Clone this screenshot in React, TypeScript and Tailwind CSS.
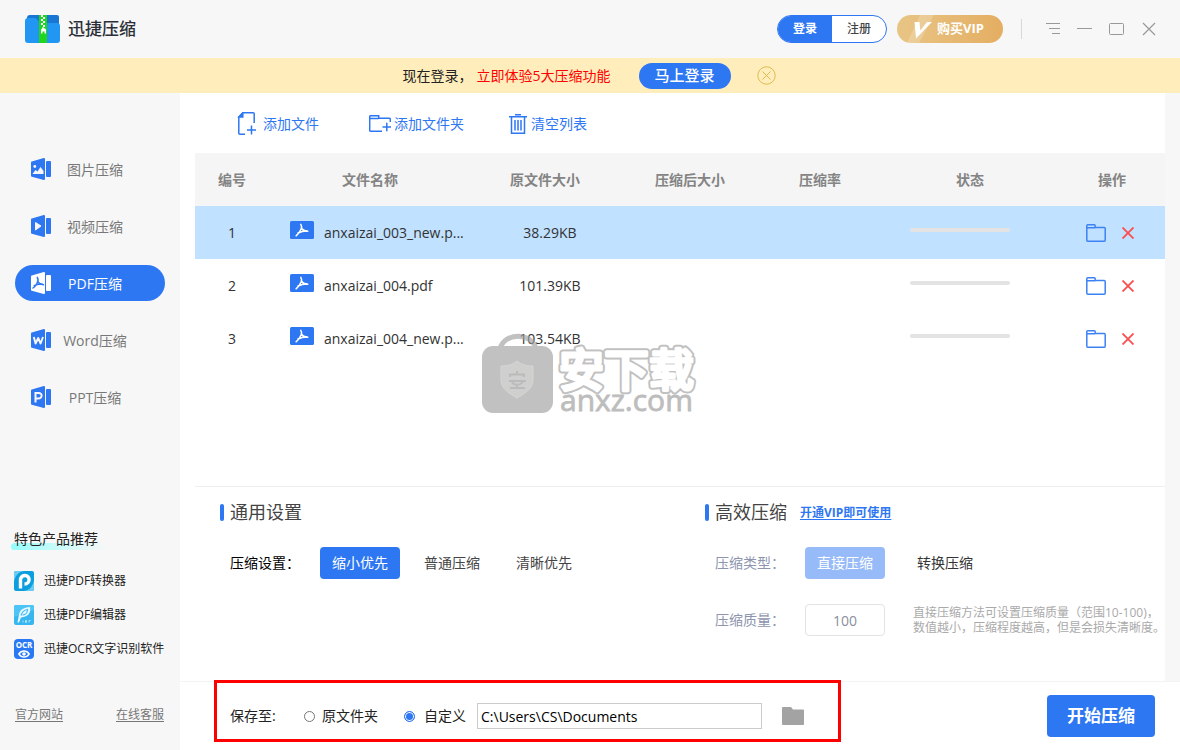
import { useState, type ReactNode } from 'react';

const NAV_ITEMS = [
  { id: 'image', label: '图片压缩' },
  { id: 'video', label: '视频压缩' },
  { id: 'pdf', label: 'PDF压缩' },
  { id: 'word', label: 'Word压缩' },
  { id: 'ppt', label: 'PPT压缩' },
];

const FILES = [
  { id: 1, name: 'anxaizai_003_new.p...', size: '38.29KB' },
  { id: 2, name: 'anxaizai_004.pdf', size: '101.39KB' },
  { id: 3, name: 'anxaizai_004_new.p...', size: '103.54KB' },
];

function Logo() {
  return (
    <svg width="35" height="28" viewBox="0 0 35 28" aria-hidden="true">
      <path d="M2 3a3 3 0 0 1 3-3h27a2 2 0 0 1 2 2v10H2z" fill="#1976d2" />
      <path d="M0 6a3 3 0 0 1 3-3h6c4 0 4 5 8 5h15a3 3 0 0 1 3 3v14a3 3 0 0 1-3 3H3a3 3 0 0 1-3-3z" fill="#2196f3" />
      <path d="M14 0h8v28h-8z" fill="#1fd51f" />
      <path d="M16 0h2v2h-2zM18 2h2v2h-2zM16 4h2v2h-2zM18 6h2v2h-2zM16 8h2v2h-2zM18 10h2v2h-2z" fill="#fff" />
      <path d="M16 15.500a2.500 2.500 0 0 1 5 0V18.500h-1.500v-2h-2v2H16zM17 12.500h2v2h-2z" fill="#fff" />
    </svg>
  );
}

function NavGlyph({ id }: { id: string }) {
  if (id === 'image') {
    return (
      <g fill="#f7f7f7">
        <circle cx="3.800" cy="8.500" r="1.400" />
        <path d="M1.500 16l3-4 2 1.500L9.500 9l3 4v3z" />
      </g>
    );
  }
  if (id === 'video') {
    return <path d="M4.500 7.500l5.500 3.500-5.500 4z" fill="#f7f7f7" stroke="#f7f7f7" strokeLinejoin="round" />;
  }
  if (id === 'pdf') {
    return (
      <path
        d="M6.300 5.300c1.200 2 1 4-.3 6-1 1.800-2.300 3.500-4 4.700M6.800 9.500c1 1.800 3 3 5.700 3.200M3.200 13.700c2.300-1.300 5-1.900 8-1.700"
        fill="none"
        stroke="#2e77f2"
        strokeWidth="1.500"
        strokeLinecap="round"
      />
    );
  }
  if (id === 'word') {
    return (
      <path
        d="M2.800 8l1.800 6.500L7.200 9l2.400 5.500L12 8"
        fill="none"
        stroke="#f7f7f7"
        strokeWidth="1.900"
        strokeLinejoin="round"
      />
    );
  }
  return <path d="M4.500 16.500V7h3c4.500 0 4 5.500-.5 5.500H5" fill="none" stroke="#f7f7f7" strokeWidth="2" />;
}

function NavIcon({ id, active }: { id: string; active: boolean }) {
  return (
    <svg width="20" height="22" viewBox="0 0 20 22" aria-hidden="true">
      <g fill={active ? '#fff' : '#2e77f2'}>
        <path d="M.8 3.400L12.800.1Q14 0 14 1v20q0 1-1.200.9L.8 18.800Q0 18.600 0 17.800V4.400Q0 3.600.8 3.400z" />
        <rect x="15" y="3" width="5" height="16" rx="1" />
      </g>
      <NavGlyph id={id} />
    </svg>
  );
}

function PdfBadge() {
  return (
    <svg width="24" height="18" viewBox="0 0 24 18" className="mb-[6px] shrink-0" aria-hidden="true">
      <rect width="24" height="18" rx="1.500" fill="#2e77f2" />
      <path
        d="M10.800 3.300c1 1.600 1 3.200.3 4.700-1 2.500-2.800 5-5 6.800M11.300 7c1 1.700 3.600 3 6.500 3.200M8 12c2.500-1.200 5.500-1.900 9-1.900"
        fill="none"
        stroke="#fff"
        strokeWidth="1.500"
        strokeLinecap="round"
      />
    </svg>
  );
}

function FolderIcon() {
  return (
    <svg width="20" height="18" viewBox="0 0 20 18" fill="none" stroke="#3d82f4" strokeWidth="1.500" aria-hidden="true">
      <path d="M.8 16.200V1.800q0-1 1-1h6.400q1 0 1 1v1.700h9q1 0 1 1v11.700q0 1-1 1H1.800q-1 0-1-1zM.8 3.700h8.400" />
    </svg>
  );
}

function ProductIcon({ kind }: { kind: string }) {
  if (kind === 'converter') {
    return (
      <svg width="20" height="20" viewBox="0 0 20 20" aria-hidden="true">
        <rect width="20" height="20" rx="2" fill="#0c9fe0" />
        <path d="M0 11V2a2 2 0 0 1 2-2h8C4 1 1 5 0 11zM20 9v9a2 2 0 0 1-2 2h-8c6-1 9-5 10-11z" fill="#6ccbf0" />
        <path d="M6.500 17.500V8Q7.500 4.500 11 4.500c5.500 0 5.500 8.500-.5 8.500" fill="none" stroke="#fff" strokeWidth="3.400" />
      </svg>
    );
  }
  if (kind === 'editor') {
    return (
      <svg width="20" height="20" viewBox="0 0 20 20" aria-hidden="true">
        <rect width="20" height="20" rx="2" fill="#38b6f0" />
        <path d="M0 12V2a2 2 0 0 1 2-2h16a2 2 0 0 1 2 2v3z" fill="#4cc5f6" />
        <path d="M3.500 17.500L5 9.500C6 5 9 2.500 16 2c1 5-1 10-9 10.500L5 17.500z" fill="#e6f7ff" />
        <path d="M7 10.500c1-3.500 3-5.500 6.500-6 0 3.500-2.500 5.500-5 5.500" fill="none" stroke="#42bdf3" strokeWidth="1.200" />
        <path d="M9 15.500v2M11.500 15.500v2h1v-2zM15 17.500v-2h1.500" fill="none" stroke="#c8eeff" strokeWidth="0.800" />
      </svg>
    );
  }
  return (
    <span className="flex size-5 flex-col items-center rounded-sm bg-[#2979f5] text-white">
      <span className="text-[8px] leading-[11px] font-bold">OCR</span>
      <svg width="12" height="8" viewBox="0 0 12 8" aria-hidden="true">
        <path d="M.8 4C3.500 0 8.500 0 11.200 4 8.500 8 3.500 8 .8 4z" fill="none" stroke="#fff" strokeWidth="1.400" />
        <circle cx="6" cy="4" r="1.800" fill="#fff" />
      </svg>
    </span>
  );
}

function TitleBar() {
  return (
    <header className="flex h-[58px] items-center justify-between bg-[#f7f7f7] pr-6 pl-[25px]">
      <div className="flex items-center gap-2">
        <Logo />
        <h1 className="text-[17px] leading-6 font-medium text-[#2b3038]">迅捷压缩</h1>
      </div>
      <div className="flex items-center">
        <div className="flex h-7 w-[110px] overflow-hidden rounded-full border border-[#2e77f2] bg-white text-xs">
          <button type="button" className="flex-1 bg-[#2e77f2] font-bold text-white">登录</button>
          <button type="button" className="flex-1 font-medium text-[#444]">注册</button>
        </div>
        <button
          type="button"
          className="ml-[10px] flex h-7 w-[106px] items-center gap-1 rounded-full bg-linear-to-r from-[#e8c585] to-[#e4ae62] pl-[10px] text-[13px] font-bold text-white"
        >
          <svg width="26" height="28" viewBox="0 0 26 28" aria-hidden="true">
            <path d="M13 0h14L12 28H0z" fill="#fff" opacity="0.200" />
            <path d="M7.500 7h5l.8 8.500L20 7h5L9 23.500z" fill="#fff" />
          </svg>
          购买VIP
        </button>
        <span className="mr-6 ml-[18px] h-5 w-px bg-[#d8d8d8]" />
        <div className="flex items-center gap-[17px] text-[#999]">
          <button type="button" aria-label="菜单">
            <svg width="14" height="14" viewBox="0 0 14 14" stroke="currentColor" aria-hidden="true">
              <path d="M0 1.500h14M3 6.500h11M6 11.500h8" />
            </svg>
          </button>
          <button type="button" aria-label="最小化">
            <svg width="15" height="14" viewBox="0 0 15 14" stroke="currentColor" aria-hidden="true">
              <path d="M0 6.500h15" />
            </svg>
          </button>
          <button type="button" aria-label="最大化">
            <svg width="15" height="14" viewBox="0 0 15 14" fill="none" stroke="currentColor" aria-hidden="true">
              <rect x="0.500" y="1.500" width="14" height="11" rx="1" />
            </svg>
          </button>
          <button type="button" aria-label="关闭">
            <svg width="15" height="14" viewBox="0 0 15 14" stroke="currentColor" strokeWidth="1.200" aria-hidden="true">
              <path d="M2 1l12 12M14 1L2 13" />
            </svg>
          </button>
        </div>
      </div>
    </header>
  );
}

function LoginBanner() {
  return (
    <div className="flex h-[35px] items-center justify-center bg-[#ffeebb] pr-[2px] text-sm">
      <span className="text-[#222]">现在登录，</span>
      <span className="ml-1 text-[#ff0000]">立即体验5大压缩功能</span>
      <button
        type="button"
        className="ml-7 h-[26px] w-[92px] rounded-full bg-[#2e77f2] text-[15px] font-medium text-white"
      >
        马上登录
      </button>
      <button type="button" className="ml-[26px]" aria-label="关闭提示">
        <svg width="19" height="19" viewBox="0 0 19 19" fill="none" stroke="#dfb94f" aria-hidden="true">
          <circle cx="9.500" cy="9.500" r="8.700" />
          <path d="M5.500 5.500l8 8M13.500 5.500l-8 8" />
        </svg>
      </button>
    </div>
  );
}

function Sidebar({ active, onSelect }: { active: string; onSelect: (id: string) => void }) {
  return (
    <aside className="flex w-[180px] shrink-0 flex-col bg-[#f7f7f7] pt-[58px]">
      <nav className="flex flex-col gap-[21px] px-[15px]">
        {NAV_ITEMS.map((item) => (
          <button
            key={item.id}
            type="button"
            onClick={() => onSelect(item.id)}
            className={`flex h-9 items-center rounded-full pl-4 text-sm ${
              active === item.id ? 'bg-[#2e77f2] text-white' : 'text-[#777]'
            }`}
          >
            <NavIcon id={item.id} active={active === item.id} />
            <span className="w-[88px] pt-px text-center">{item.label}</span>
          </button>
        ))}
      </nav>

      <div className="mt-auto pb-[25px] pl-[14px]">
        <div className="relative">
          <span className="absolute top-[14px] -left-[3px] h-[7px] w-24 rounded-full bg-linear-to-r from-[#92fdfb] to-[#f7f7f7]" />
          <h2 className="relative text-sm leading-5 text-[#222]">特色产品推荐</h2>
        </div>
        <ul className="mt-[22px] flex flex-col gap-[14px] text-xs leading-5 text-[#222]">
          <li className="flex items-center gap-[10px]">
            <ProductIcon kind="converter" />
            迅捷PDF转换器
          </li>
          <li className="flex items-center gap-[10px]">
            <ProductIcon kind="editor" />
            迅捷PDF编辑器
          </li>
          <li className="flex items-center gap-[10px] whitespace-nowrap">
            <ProductIcon kind="ocr" />
            迅捷OCR文字识别软件
          </li>
        </ul>
        <div className="mt-[46px] mr-4 ml-px flex justify-between text-xs leading-5 text-[#777] underline underline-offset-2">
          <a href="#site">官方网站</a>
          <a href="#support">在线客服</a>
        </div>
      </div>
    </aside>
  );
}

function Toolbar() {
  return (
    <div className="flex h-[60px] items-center pt-px pl-[57px] text-sm text-[#2e77f2]">
      <button type="button" className="flex items-center gap-1">
        <svg width="22" height="24" viewBox="0 0 22 24" fill="none" stroke="currentColor" strokeWidth="1.500" aria-hidden="true">
          <path d="M17.200 11V1.800q0-1-1-1H5.800L1.800 5v16.200q0 1 1 1H8" />
          <path d="M5.800 1v4H2z" fill="currentColor" />
          <path d="M10 18h9M14.500 13.500v9" />
        </svg>
        添加文件
      </button>
      <button type="button" className="ml-[50px] flex items-center gap-[3px]">
        <svg width="22" height="18" viewBox="0 0 22 18" fill="none" stroke="currentColor" strokeWidth="1.500" aria-hidden="true">
          <path d="M13 16.300H1.700q-1 0-1-1V1.700q0-1 1-1h8v2.600h10.600q1 0 1 1V7M.7 3.500h9" />
          <path d="M13.500 12h8.500M17.800 7.800v8.500" />
        </svg>
        添加文件夹
      </button>
      <button type="button" className="ml-[45px] flex items-center gap-1">
        <svg width="18" height="20" viewBox="0 0 18 20" fill="none" stroke="currentColor" strokeWidth="1.500" aria-hidden="true">
          <path d="M0 2.800h18M6 .8h6M2.500 3v16.200h13V3M6 6v10.500M9 6v10.500M12 6v10.500" />
        </svg>
        清空列表
      </button>
    </div>
  );
}

function FileTable() {
  const [selected, setSelected] = useState(1);

  return (
    <table className="ml-[15px] w-[calc(100%-15px)] table-fixed text-center text-sm text-[#333]">
      <colgroup>
        <col className="w-[74px]" />
        <col className="w-[202px]" />
        <col className="w-[148px]" />
        <col className="w-[142px]" />
        <col className="w-[118px]" />
        <col className="w-[182px]" />
        <col className="w-[104px]" />
      </colgroup>
      <thead>
        <tr className="h-[53px] bg-[#f5f5f5] text-[#848484]">
          <th className="font-bold">编号</th>
          <th className="font-bold">文件名称</th>
          <th className="font-bold">原文件大小</th>
          <th className="font-bold">压缩后大小</th>
          <th className="font-bold">压缩率</th>
          <th className="font-bold">状态</th>
          <th className="pr-[2px] font-bold">操作</th>
        </tr>
      </thead>
      <tbody>
        {FILES.map((file) => (
          <tr
            key={file.id}
            onClick={() => setSelected(file.id)}
            className={`h-[53px] ${selected === file.id ? 'bg-[#c0e1ff]' : ''}`}
          >
            <td>{file.id}</td>
            <td>
              <div className="flex items-center gap-[10px] pl-[21px] whitespace-nowrap">
                <PdfBadge />
                {file.name}
              </div>
            </td>
            <td className="pl-[10px]">{file.size}</td>
            <td />
            <td />
            <td className="pr-5">
              <div className="mx-auto mb-[5px] h-1 w-[100px] rounded-full bg-[#e3e3e3]" />
            </td>
            <td>
              <div className="flex items-center gap-4 pl-[25px]">
                <button type="button" aria-label="打开文件夹">
                  <FolderIcon />
                </button>
                <button type="button" aria-label="删除">
                  <svg width="12" height="12" viewBox="0 0 12 12" stroke="#fb4e4e" strokeWidth="1.800" aria-hidden="true">
                    <path d="M.5.5l11 11M11.500.5l-11 11" />
                  </svg>
                </button>
              </div>
            </td>
          </tr>
        ))}
      </tbody>
    </table>
  );
}

function Watermark() {
  return (
    <svg
      width="220"
      height="96"
      viewBox="0 0 220 96"
      className="pointer-events-none absolute top-[239px] left-[302px]"
    >
      <path d="M18 17c4-17 32-17 36 0" fill="none" stroke="#a0a0a0" strokeOpacity="0.650" strokeWidth="5" />
      <rect y="14" width="71" height="67" rx="11" fill="#c1c1c1" />
      <path
        d="M35 29c5 4 10 5 16 5v14c0 9-9 14-16 18-7-4-16-9-16-18V34c6 0 11-1 16-5z"
        fill="#cfcfcd"
        stroke="#d6d6d6"
      />
      <path
        d="M35 39v3M28 45v-2.500h14V45M27 49h17M30 49c1 5 9 5 11 0M28 56h15M35 52v3"
        fill="none"
        stroke="#bbb"
        strokeWidth="2"
      />
      {/* two passes over one text give the rounded outline */}
      <defs>
        <text id="wm-name" x="77" y="55" fontSize="45" fontWeight="500" strokeLinejoin="round">安下载</text>
      </defs>
      <use href="#wm-name" fill="#c1c1c1" stroke="#c1c1c1" strokeWidth="7" />
      <use href="#wm-name" fill="#fff" stroke="#fff" strokeWidth="3" />
      <text x="78" y="79" fontSize="30" fill="#bdbdbd" stroke="#bdbdbd" strokeWidth="0.800">anxz.com</text>
    </svg>
  );
}

function SectionTitle({ children }: { children: ReactNode }) {
  return (
    <h2 className="flex items-center gap-[6px] text-lg leading-6 text-[#444]">
      <span className="h-[17px] w-1 rounded-sm bg-[#2e77f2]" />
      {children}
    </h2>
  );
}

function Settings() {
  const [mode, setMode] = useState('缩小优先');

  return (
    <section className="ml-[15px] grid h-[195px] grid-cols-2 border-t border-[#eee] pt-[13px] text-sm">
      <div className="pl-[25px]">
        <SectionTitle>通用设置</SectionTitle>
        <div className="mt-[23px] flex items-center pl-[10px]">
          <span className="w-[90px] text-black">压缩设置：</span>
          <div className="flex gap-3">
            {['缩小优先', '普通压缩', '清晰优先'].map((name) => (
              <button
                key={name}
                type="button"
                onClick={() => setMode(name)}
                className={`h-8 w-20 rounded ${mode === name ? 'bg-[#2e77f2] text-white' : 'text-[#444]'}`}
              >
                {name}
              </button>
            ))}
          </div>
        </div>
      </div>

      <div className="pl-[25px]">
        <div className="flex items-center gap-[13px]">
          <SectionTitle>高效压缩</SectionTitle>
          <a href="#vip" className="pt-[2px] text-xs font-bold text-[#2e77f2] underline underline-offset-2">
            开通VIP即可使用
          </a>
        </div>
        <div className="mt-[23px] flex items-center pl-[10px]">
          <span className="w-[90px] text-[#8d95ae]">压缩类型：</span>
          <button type="button" className="h-8 w-20 rounded bg-[#97bbf9] text-white">直接压缩</button>
          <button type="button" className="ml-5 h-8 w-20 text-[#333]">转换压缩</button>
        </div>
        <div className="mt-[25px] flex items-center pl-[10px]">
          <label htmlFor="quality" className="w-[90px] shrink-0 text-[#8d95ae]">压缩质量：</label>
          <input
            id="quality"
            defaultValue="100"
            className="h-8 w-20 shrink-0 rounded-sm border border-[#e3e3e3] text-center text-sm text-[#8a8f9c] outline-none"
          />
          <p className="ml-7 text-xs leading-[15px] whitespace-nowrap text-[#aaa]">
            直接压缩方法可设置压缩质量（范围10-100)，
            <br />
            数值越小，压缩程度越高，但是会损失清晰度。
          </p>
        </div>
      </div>
    </section>
  );
}

const RADIO_CLASS =
  'size-[11px] appearance-none rounded-full border border-[#767676] bg-white checked:border-[#2e77f2] checked:bg-[#2e77f2] checked:shadow-[inset_0_0_0_1px_#fff]';

function SaveBar() {
  const [target, setTarget] = useState('custom');

  return (
    <footer className="flex h-[69px] items-center justify-between border-t border-[#f3f3f3] bg-white pr-[25px] pl-[50px] text-sm text-[#222]">
      <div className="relative flex items-center">
        {/* highlight frame around the output options */}
        <div className="pointer-events-none absolute -top-[23px] -right-[37px] -bottom-[13px] -left-4 border-3 border-[#ff0000]" />
        <span className="w-[74px]">保存至:</span>
        <label className="flex items-center gap-[7px]">
          <input
            type="radio"
            name="target"
            checked={target === 'source'}
            onChange={() => setTarget('source')}
            className={RADIO_CLASS}
          />
          原文件夹
        </label>
        <label className="ml-[26px] flex items-center gap-[9px]">
          <input
            type="radio"
            name="target"
            checked={target === 'custom'}
            onChange={() => setTarget('custom')}
            className={RADIO_CLASS}
          />
          自定义
        </label>
        <input
          aria-label="保存路径"
          defaultValue="C:\Users\CS\Documents"
          className="ml-[11px] h-[26px] w-[285px] border border-[#ccc] px-[3px] text-sm text-black outline-none"
        />
        <button type="button" className="ml-5" aria-label="选择文件夹">
          <svg width="22" height="18" viewBox="0 0 22 18" aria-hidden="true">
            <path d="M0 1a1 1 0 0 1 1-1h8l2 2.500h10a1 1 0 0 1 1 1V17a1 1 0 0 1-1 1H1a1 1 0 0 1-1-1z" fill="#a3a3a3" />
          </svg>
        </button>
      </div>
      <button type="button" className="h-[42px] w-[108px] rounded bg-[#2e77f2] text-[17px] font-bold text-white">
        开始压缩
      </button>
    </footer>
  );
}

export default function App() {
  const [active, setActive] = useState('pdf');

  return (
    <div className="flex min-h-screen flex-col bg-[#f7f7f7] font-['Open_Sans','Noto_Sans_CJK_SC',sans-serif]">
      <TitleBar />
      <LoginBanner />
      <div className="flex flex-1">
        <Sidebar active={active} onSelect={setActive} />
        <div className="flex min-w-0 flex-1 flex-col">
          <main className="relative mr-[15px] flex flex-1 flex-col bg-white">
            <Toolbar />
            <div className="flex-1">
              <FileTable />
            </div>
            <Watermark />
            <Settings />
          </main>
          <SaveBar />
        </div>
      </div>
    </div>
  );
}
